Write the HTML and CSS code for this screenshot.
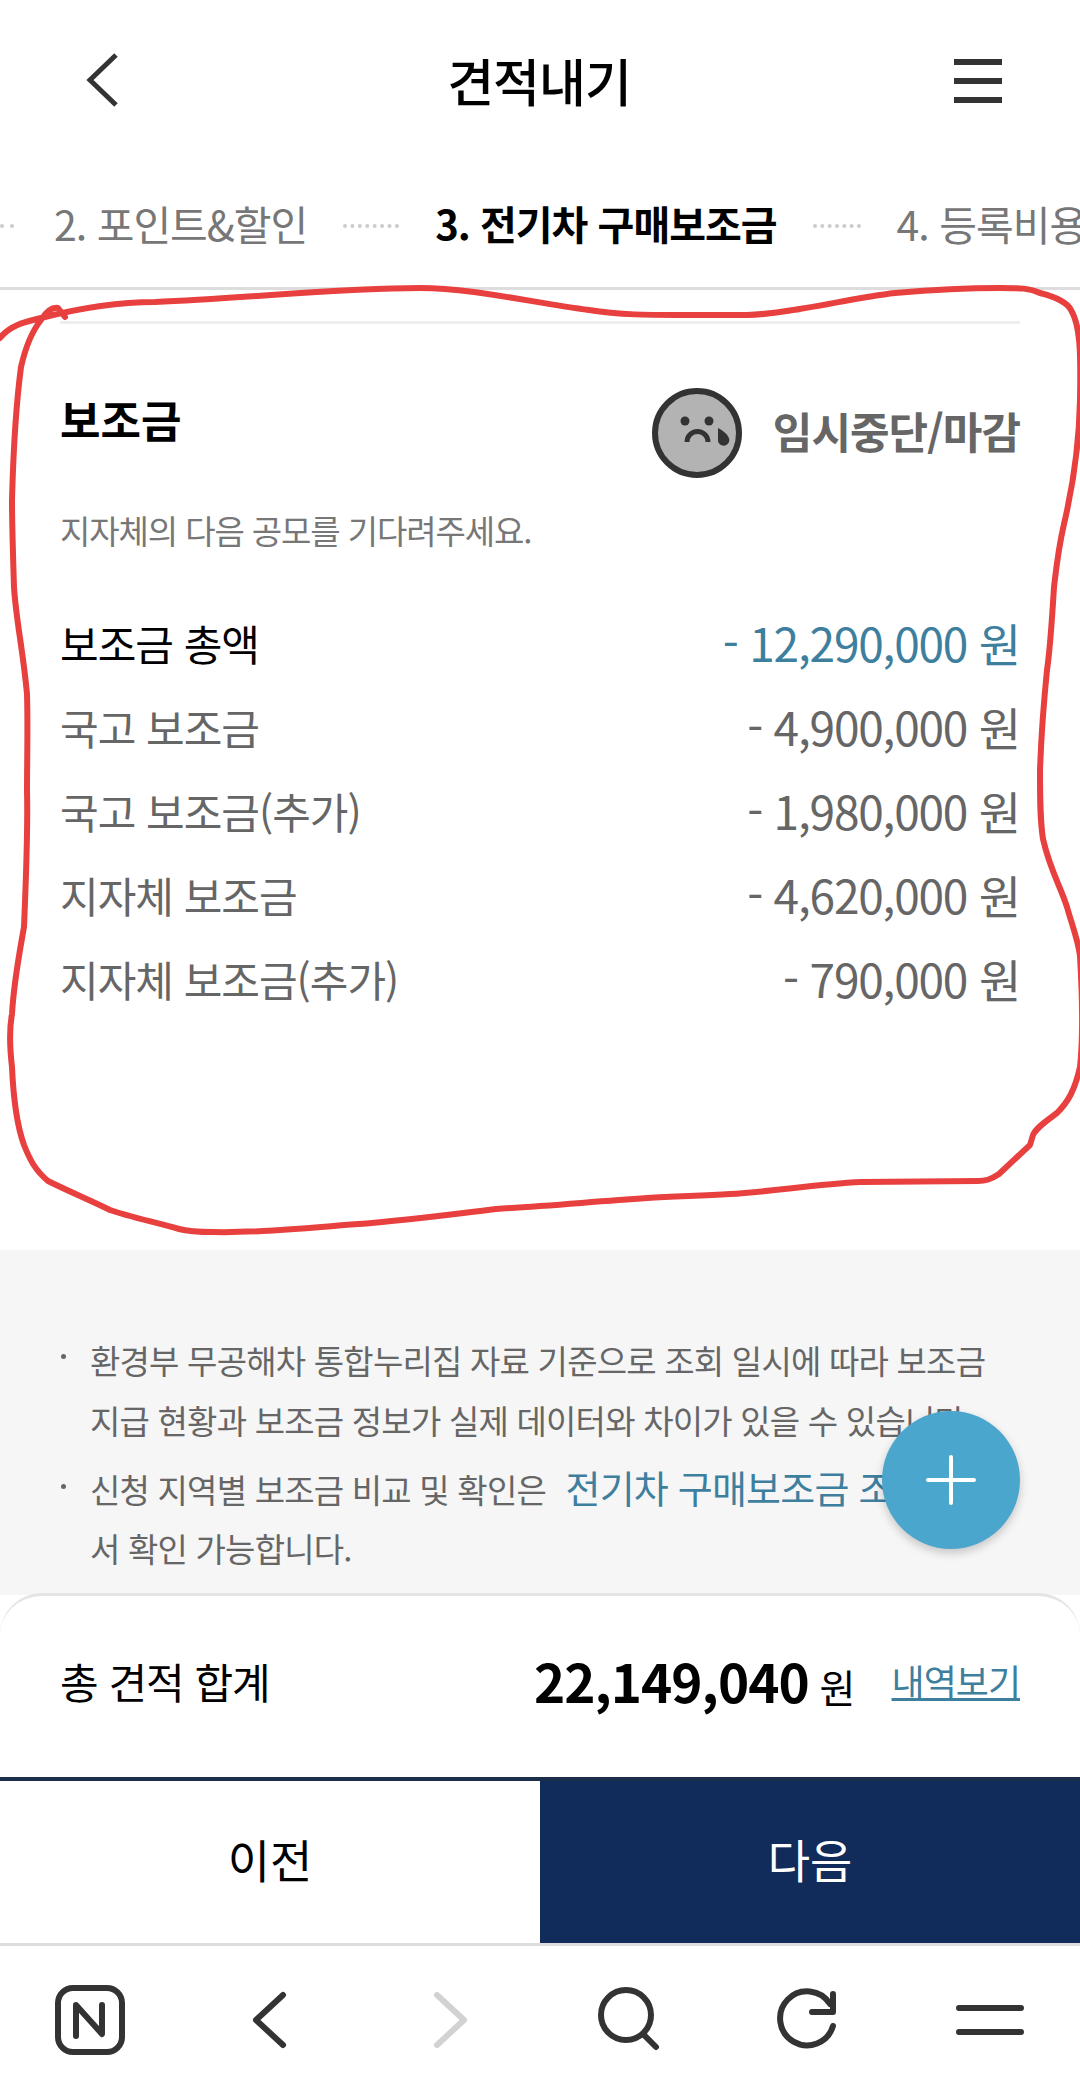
FILE: index.html
```html
<!DOCTYPE html>
<html lang="ko">

<head>
    <meta charset="utf-8">
    <meta name="viewport" content="width=device-width, initial-scale=1.0">
    <title>견적내기</title>
    <link rel="stylesheet" href="styles.css">
</head>

<body>

    <div class="page">
        <header class="topbar">
            <svg class="topbar-back" width="40" height="60" viewBox="0 0 40 60"><path d="M32 5 L6 30 L32 55"/></svg>
            <h1 class="topbar-title">견적내기</h1>
            <div class="topbar-menu"><span></span><span></span><span></span></div>
        </header>

        <nav class="steps">
            <span class="steps-dots steps-dots-cut"></span>
            <span class="step">2. 포인트&amp;할인</span>
            <span class="steps-dots"></span>
            <span class="step step-on">3. 전기차 구매보조금</span>
            <span class="steps-dots steps-dots-short"></span>
            <span class="step">4. 등록비용</span>
        </nav>

        <section class="subsidy">
            <div class="subsidy-head">
                <h2 class="subsidy-title">보조금</h2>
                <div class="subsidy-state">
                    <svg class="sad" width="92" height="92" viewBox="0 0 92 92">
                        <circle cx="46" cy="46" r="42" fill="#b3b3b3" stroke="#333" stroke-width="6"/>
                        <circle cx="34" cy="34" r="4.5" fill="#333"/>
                        <circle cx="58" cy="34" r="4.5" fill="#333"/>
                        <path d="M36 55 a10 10 0 0 1 21 0" fill="none" stroke="#333" stroke-width="5"/>
                        <path d="M67 41 C73 44 80 50 78 55 C76 60 68 60 67 54 Z" fill="#333"/>
                    </svg>
                    <span>임시중단/마감</span>
                </div>
            </div>
            <p class="subsidy-note">지자체의 다음 공모를 기다려주세요.</p>

            <ul class="amounts">
                <li class="amount amount-total"><span>보조금 총액</span><span class="amount-num amount-val">- 12,290,000 원</span></li>
                <li class="amount"><span>국고 보조금</span><span class="amount-num">- 4,900,000 원</span></li>
                <li class="amount"><span>국고 보조금(추가)</span><span class="amount-num">- 1,980,000 원</span></li>
                <li class="amount"><span>지자체 보조금</span><span class="amount-num">- 4,620,000 원</span></li>
                <li class="amount"><span>지자체 보조금(추가)</span><span class="amount-num">- 790,000 원</span></li>
            </ul>
        </section>

        <section class="notice">
            <ul class="notice-list">
                <li>환경부 무공해차 통합누리집 자료 기준으로 조회 일시에 따라 보조금<br>지급 현황과 보조금 정보가 실제 데이터와 차이가 있을 수 있습니다.</li>
                <li>신청 지역별 보조금 비교 및 확인은 <a class="notice-link">전기차 구매보조금 조회</a><br>서 확인 가능합니다.</li>
            </ul>
        </section>

        <section class="total">
            <span class="total-label">총 견적 합계</span>
            <span class="total-price"><b>22,149,040</b> 원</span>
            <a class="total-link">내역보기</a>
        </section>

        <div class="actions">
            <button class="action">이전</button>
            <button class="action action-next">다음</button>
        </div>

        <footer class="browserbar">
            <svg width="72" height="72" viewBox="0 0 72 72"><rect x="4" y="4" width="64" height="64" rx="15"/><path d="M22 52 V21 L48 50 V21"/></svg>
            <svg width="40" height="60" viewBox="0 0 40 60"><path d="M33 5 L6 30 L33 55"/></svg>
            <svg class="browserbar-off" width="40" height="60" viewBox="0 0 40 60"><path d="M7 5 L34 30 L7 55"/></svg>
            <svg width="72" height="72" viewBox="0 0 72 72"><circle cx="32" cy="31" r="25"/><path d="M49 50 L62 63"/></svg>
            <svg width="68" height="68" viewBox="0 0 68 68"><path d="M57 40 A27 27 0 1 1 54 18"/><path d="M57 8 V26 H36"/></svg>
            <svg width="70" height="40" viewBox="0 0 70 40"><path d="M4 8 H66 M4 32 H66"/></svg>
        </footer>

        <button class="fab"><svg width="50" height="50" viewBox="0 0 50 50"><path d="M25 2 V48 M2 25 H48"/></svg></button>

        <!-- red marker someone drew around the subsidy box -->
        <svg class="marker" width="1080" height="2094" viewBox="0 0 1080 2094">
            <path d="M0 338 C10 325 25 322 41 318 C80 308 115 302 155 302 C250 298 340 288 420 288 C470 288 530 302 589 310 C620 315 650 315 678 315 L747 315 C790 314 850 298 895 293 C930 290 965 288 999 288 C1020 288 1030 288 1040 293 C1060 298 1068 304 1071 310 C1080 325 1081 350 1080 400 C1079 450 1072 490 1064 524 C1058 550 1056 570 1054 587 C1052 620 1050 650 1047 670 C1043 710 1041 740 1040 771 C1040 800 1040 820 1043 839 C1050 870 1060 885 1067 907 C1072 925 1078 940 1080 956 C1082 990 1084 1030 1080 1067 C1075 1090 1068 1102 1057 1113 C1045 1122 1036 1128 1033 1135 L1030 1145 L999 1174 C990 1180 985 1181 978 1181 L861 1182 C815 1184 770 1192 730 1194 C700 1196 675 1196 647 1198 C590 1202 545 1206 496 1209 C445 1215 395 1222 344 1225 C300 1229 250 1233 213 1232 C200 1232 190 1232 179 1229 C155 1222 130 1217 110 1210 C90 1200 70 1192 48 1181 C35 1170 30 1160 24 1145 C15 1120 13 1090 12 1067 C10 1050 9 1030 12 1014 C14 980 20 950 24 927 C26 880 28 830 27 791 C27 760 28 725 27 694 C23 650 16 620 14 587 C13 555 12 525 12 500 C13 465 14 420 21 367 C26 345 33 330 41 320 C46 312 52 307 58 308 L65 317"/>
        </svg>
    </div>

</body>

</html>
```

FILE: styles.css
```css
* {
    box-sizing: border-box;
}

body {
    margin: 0;
    background-color: #fff;
    font-family: "Noto Sans CJK KR", "Noto Sans", sans-serif;
    color: #000;
}

ul {
    list-style: none;
    margin: 0;
    padding: 0;
}

.page {
    position: relative;
    display: flex;
    flex-direction: column;
    width: 1080px;
    height: 2094px;
    overflow: hidden;
}

/* top bar */
.topbar {
    display: flex;
    align-items: center;
    justify-content: space-between;
    height: 160px;
    padding: 0 78px 0 84px;
    flex: none;
}

.topbar-back path {
    fill: none;
    stroke: #333;
    stroke-width: 5;
}

.topbar-title {
    margin: 0;
    font-size: 51px;
    font-weight: 500;
    letter-spacing: -1px;
}

.topbar-menu {
    display: flex;
    flex-direction: column;
    gap: 13px;
    width: 48px;
    margin-top: 2px;
}

.topbar-menu span {
    height: 6px;
    background-color: #333;
}

/* steps */
.steps {
    display: flex;
    align-items: center;
    gap: 36px;
    height: 130px;
    padding-bottom: 2px;
    white-space: nowrap;
    border-bottom: 3px solid #ddd;
    flex: none;
    overflow: hidden;
}

.step {
    font-size: 41px;
    color: #777;
    letter-spacing: -1px;
    flex: none;
}

.step-on {
    color: #000;
    font-weight: 700;
    font-size: 40px;
}

.steps-dots {
    width: 56px;
    margin-top: 6px;
    border-top: 4px dotted #ccc;
    flex: none;
}

.steps-dots-cut {
    width: 14px;
    margin-right: 4px;
}

.steps-dots-short {
    width: 48px;
}

/* subsidy */
.subsidy {
    height: 960px;
    margin: 0 60px;
    flex: none;
}

.subsidy-head {
    display: flex;
    align-items: center;
    justify-content: space-between;
    margin-top: 31px;
    padding-top: 57px;
    border-top: 3px solid #eee;
}

.subsidy-title {
    margin: -22px 0 0;
    font-size: 44px;
    font-weight: 700;
}

.subsidy-state {
    display: flex;
    align-items: center;
    gap: 30px;
    font-size: 43px;
    font-weight: 700;
    color: #666;
    letter-spacing: -1px;
}

.sad {
    margin-top: 6px;
}

.subsidy-note {
    margin: 27px 0 0;
    font-size: 33px;
    color: #777;
    letter-spacing: -1.1px;
}

.amounts {
    margin-top: 46px;
}

.amount {
    display: flex;
    justify-content: space-between;
    align-items: center;
    height: 84px;
    font-size: 42px;
    color: #666;
    letter-spacing: -1px;
}

.amount-total {
    color: #000;
}

.amount-num {
    font-size: 46px;
    letter-spacing: -1.2px;
}

.amount-val {
    color: #3f7f9e;
}

/* notice, runs under the bottom sheet */
.notice {
    flex: 1;
    min-height: 0;
    background-color: #f6f6f6;
    padding: 80px 40px 0 60px;
}

.notice-list li {
    position: relative;
    padding-left: 30px;
    margin-bottom: 10px;
    font-size: 33px;
    line-height: 60px;
    color: #666;
    letter-spacing: -0.8px;
    white-space: nowrap;
}

.notice-list li + li {
    line-height: 59px;
}

.notice-list li::before {
    content: "";
    position: absolute;
    left: 1px;
    top: 24px;
    width: 5px;
    height: 5px;
    border-radius: 50%;
    background-color: #666;
}

.notice-link {
    margin-left: 11px;
    font-size: 38px;
    line-height: 1;
    color: #3f7f9e;
}

/* bottom sheet */
.total {
    display: flex;
    align-items: center;
    height: 184px;
    margin-top: -2px;
    padding: 0 60px 13px;
    background-color: #fff;
    border-top: 3px solid #e4e4e4;
    border-radius: 42px 42px 0 0;
    flex: none;
    position: relative;
}

.total-label {
    font-size: 42px;
    letter-spacing: -1px;
}

.total-price {
    margin-left: auto;
    font-size: 39px;
}

.total-price b {
    font-size: 53px;
    letter-spacing: -1px;
}

.total-link {
    margin-left: 36px;
    font-size: 36px;
    color: #3f7f9e;
    text-decoration: underline;
    letter-spacing: -1px;
}

.actions {
    display: grid;
    grid-template-columns: 1fr 1fr;
    height: 169px;
    border-top: 4px solid #1b2f4a;
    border-bottom: 3px solid #ddd;
    flex: none;
    position: relative;
}

.action {
    padding: 0 0 8px;
    border: 0;
    background-color: #fff;
    font-family: inherit;
    font-size: 46px;
    color: #000;
}

.action-next {
    background-color: #112b5a;
    color: #fff;
}

/* browser toolbar */
.browserbar {
    display: grid;
    grid-template-columns: repeat(6, 180px);
    justify-items: center;
    align-items: center;
    height: 148px;
    background-color: #fff;
    flex: none;
    position: relative;
}

.browserbar svg {
    fill: none;
    stroke: #333;
    stroke-width: 6;
    stroke-linecap: round;
    stroke-linejoin: round;
}

.browserbar .browserbar-off {
    stroke: #d2d2d2;
}

.fab {
    position: absolute;
    left: 882px;
    top: 1411px;
    width: 138px;
    height: 138px;
    display: flex;
    align-items: center;
    justify-content: center;
    padding: 0;
    border: 0;
    border-radius: 50%;
    background-color: #4ba6ce;
    box-shadow: 0 4px 10px rgba(0, 0, 0, 0.2);
}

.fab path {
    stroke: #fff;
    stroke-width: 4;
    stroke-linecap: round;
}

.marker {
    position: absolute;
    left: 0;
    top: 0;
    pointer-events: none;
}

.marker path {
    fill: none;
    stroke: #e8403e;
    stroke-width: 6;
    stroke-linecap: round;
    stroke-linejoin: round;
}
```
